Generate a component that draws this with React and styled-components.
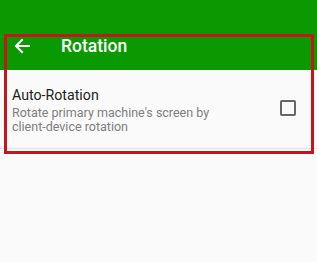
import React from "react";
import styled, { createGlobalStyle } from "styled-components";

const GlobalStyle = createGlobalStyle`
  html, body {
    margin: 0;
    padding: 0;
    background: #fafafa;
    font-family: Roboto, "Noto Sans", sans-serif;
  }
`;

const Screen = styled.div`
  position: relative;
  width: 317px;
  height: 262px;
  background: #fafafa;
  overflow: hidden;
`;

const AppBar = styled.header`
  height: 70px;
  background: #0a9a00;
  display: flex;
  align-items: flex-end;
`;

const Toolbar = styled.div`
  height: 48px;
  width: 100%;
  display: flex;
  align-items: center;
  padding-left: 10px;
  box-sizing: border-box;
`;

const BackButton = styled.button`
  width: 24px;
  height: 24px;
  padding: 0;
  border: 0;
  background: none;
  color: #fff;
  display: flex;
  align-items: center;
  justify-content: center;
  margin-right: 27px;
`;

const Title = styled.h1`
  margin: 0;
  color: #fff;
  font-size: 17.5px;
  font-weight: 500;
  line-height: 24px;
`;

const List = styled.div`
  display: flex;
  flex-direction: column;
`;

const Item = styled.div`
  display: flex;
  align-items: center;
  padding: 0 21px 0 12px;
  border-bottom: 1px solid #e2e2e2;
  height: 79px;
  box-sizing: border-box;
`;

const ItemText = styled.div`
  flex: 1;
  display: flex;
  flex-direction: column;
  margin-top: 1px;
`;

const ItemTitle = styled.div`
  font-size: 14.2px;
  line-height: 18px;
  color: #212121;
  margin-bottom: 2px;
`;

const ItemSummary = styled.div`
  font-size: 12.5px;
  line-height: 14px;
  color: #7e7e7e;
  max-width: 205px;
`;

const Checkbox = styled.span`
  flex: none;
  width: 16px;
  height: 16px;
  box-sizing: border-box;
  border: 2px solid #666;
  border-radius: 2px;
  margin-top: -2px;
`;

const Highlight = styled.div`
  position: absolute;
  left: 4px;
  top: 34px;
  width: 310px;
  height: 120px;
  border: 3px solid #c4161c;
  box-sizing: border-box;
  pointer-events: none;
`;

export default function App() {
  return (
    <>
      <GlobalStyle />
      <Screen>
        <AppBar>
          <Toolbar>
            <BackButton aria-label="Back">
              <svg width="16" height="16" viewBox="0 0 16 16" fill="none">
                <path
                  d="M15 8H2M8 2L2 8l6 6"
                  stroke="#fff"
                  strokeWidth="2"
                  strokeLinecap="square"
                />
              </svg>
            </BackButton>
            <Title>Rotation</Title>
          </Toolbar>
        </AppBar>
        <List>
          <Item>
            <ItemText>
              <ItemTitle>Auto-Rotation</ItemTitle>
              <ItemSummary>
                Rotate primary machine's screen by client-device rotation
              </ItemSummary>
            </ItemText>
            <Checkbox />
          </Item>
        </List>
        <Highlight />
      </Screen>
    </>
  );
}
